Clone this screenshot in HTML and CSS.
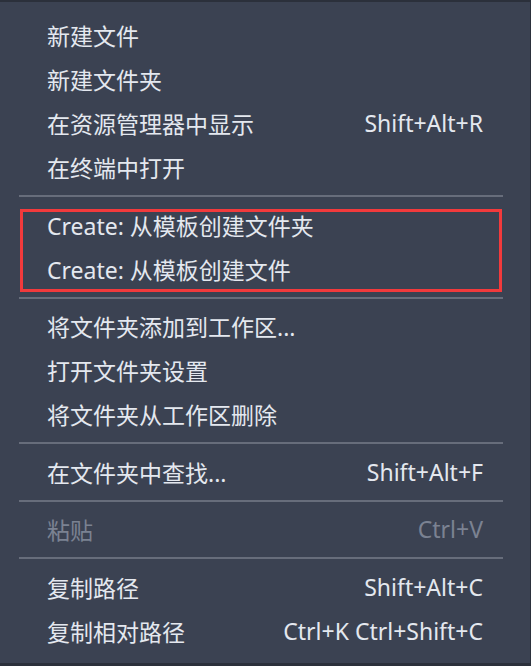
FILE: index.html
```html
<!DOCTYPE html>
<html lang="zh-CN">
<head>
<meta charset="utf-8">
<title>Context menu</title>
<link rel="stylesheet" href="styles.css">
</head>
<body>
<div class="frame">
  <div class="menu">
    <div class="item"><span class="label">新建文件</span></div>
    <div class="item"><span class="label">新建文件夹</span></div>
    <div class="item"><span class="label">在资源管理器中显示</span><span class="key">Shift+Alt+R</span></div>
    <div class="item"><span class="label">在终端中打开</span></div>
    <div class="sep"></div>
    <div class="group marked">
      <div class="item"><span class="label">Create: 从模板创建文件夹</span></div>
      <div class="item"><span class="label">Create: 从模板创建文件</span></div>
    </div>
    <div class="sep"></div>
    <div class="item"><span class="label">将文件夹添加到工作区...</span></div>
    <div class="item"><span class="label">打开文件夹设置</span></div>
    <div class="item"><span class="label">将文件夹从工作区删除</span></div>
    <div class="sep"></div>
    <div class="item"><span class="label">在文件夹中查找...</span><span class="key">Shift+Alt+F</span></div>
    <div class="sep"></div>
    <div class="item disabled"><span class="label">粘贴</span><span class="key">Ctrl+V</span></div>
    <div class="sep"></div>
    <div class="item"><span class="label">复制路径</span><span class="key">Shift+Alt+C</span></div>
    <div class="item"><span class="label">复制相对路径</span><span class="key">Ctrl+K Ctrl+Shift+C</span></div>
  </div>
</div>
</body>
</html>
```
FILE: styles.css
```css
html, body {
  margin: 0;
  padding: 0;
  background: #2b303b;
}
body {
  width: 531px;
  height: 666px;
  overflow: hidden;
  font-family: "Noto Sans", "Noto Sans CJK SC", sans-serif;
}
.frame {
  padding-top: 2px;
  width: 530px;
  height: 661px;
}
.menu {
  background: #3b4252;
  height: 661px;
  box-sizing: border-box;
  padding-top: 11px;
  display: flex;
  flex-direction: column;
}
.item {
  height: 44px;
  flex: none;
  display: flex;
  align-items: center;
  justify-content: space-between;
  padding: 0 47px 0 47px;
  color: #e4e8ef;
  font-size: 23px;
  white-space: nowrap;
}
.item.disabled {
  color: #7b8292;
}
.sep {
  flex: none;
  height: 2px;
  background: #676d7b;
  margin: 6px 27px 5.5px 19px;
}
.group {
  position: relative;
}
.marked::after {
  content: "";
  position: absolute;
  left: 20px;
  right: 28px;
  top: 6px;
  bottom: -1px;
  border: 3px solid #f23a3c;
  pointer-events: none;
}
```
